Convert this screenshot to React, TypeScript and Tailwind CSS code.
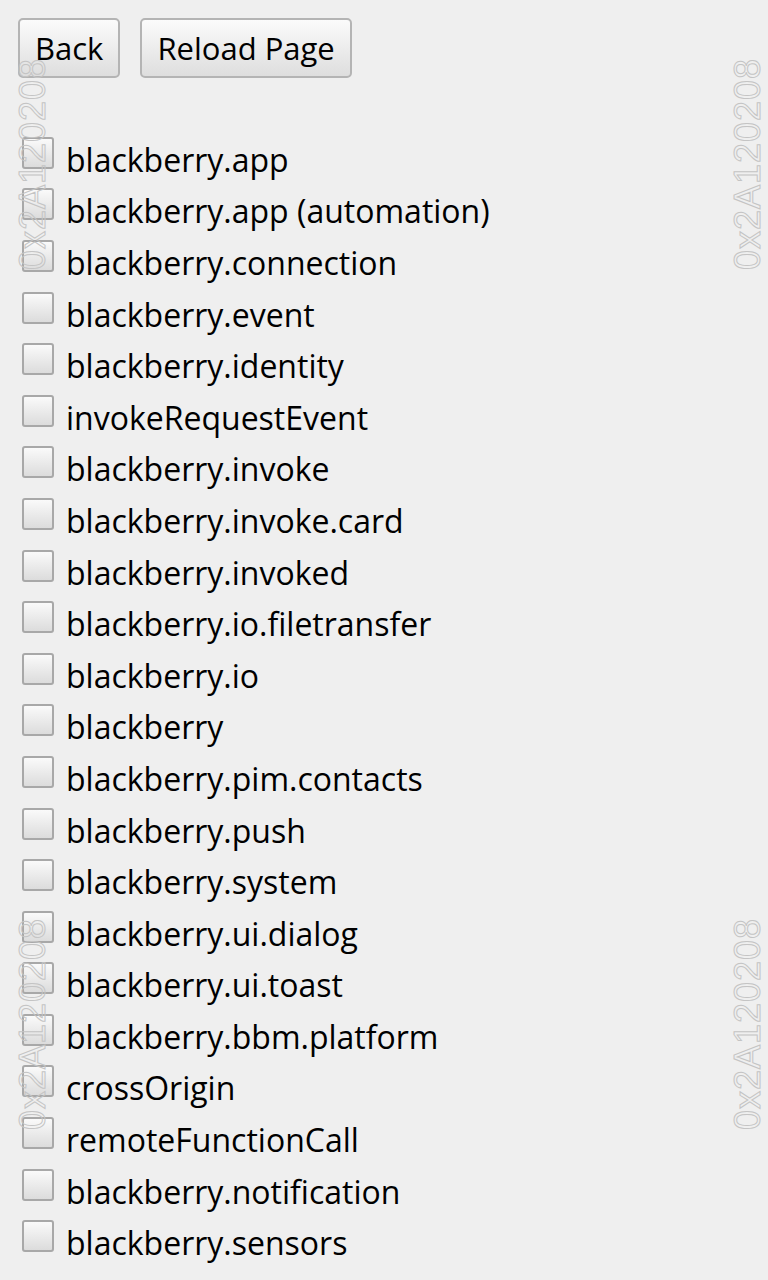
const items = [
  "blackberry.app",
  "blackberry.app (automation)",
  "blackberry.connection",
  "blackberry.event",
  "blackberry.identity",
  "invokeRequestEvent",
  "blackberry.invoke",
  "blackberry.invoke.card",
  "blackberry.invoked",
  "blackberry.io.filetransfer",
  "blackberry.io",
  "blackberry",
  "blackberry.pim.contacts",
  "blackberry.push",
  "blackberry.system",
  "blackberry.ui.dialog",
  "blackberry.ui.toast",
  "blackberry.bbm.platform",
  "crossOrigin",
  "remoteFunctionCall",
  "blackberry.notification",
  "blackberry.sensors",
];

// faint outlined serial stamped on both edges of the screen
function Watermark({ className }: { className: string }) {
  return (
    <div
      className={`absolute pointer-events-none -rotate-90 text-[36px] leading-none tracking-[1px] text-transparent font-['Liberation_Sans',sans-serif] [-webkit-text-stroke:1px_#c4c4c4] ${className}`}
    >
      0x2A120208
    </div>
  );
}

export default function App() {
  return (
    <div className="relative min-h-[1280px] w-[768px] bg-[#efefef] font-['Open_Sans',sans-serif] text-black overflow-hidden">
      <div className="flex gap-5 pl-[18px] pt-[18px]">
        <button className="h-[60px] px-[15px] rounded-[5px] border-2 border-[#b4b4b4] bg-gradient-to-b from-[#fbfbfb] to-[#dedede] text-[31px] leading-none">
          Back
        </button>
        <button className="h-[60px] px-[15px] rounded-[5px] border-2 border-[#b4b4b4] bg-gradient-to-b from-[#fbfbfb] to-[#dedede] text-[31px] leading-none">
          Reload Page
        </button>
      </div>

      <ul className="pt-[56px] pl-[22px]">
        {items.map((item) => (
          <li key={item} className="flex items-center h-[51.6px] gap-3">
            <span className="w-[32px] h-[32px] -mt-[14px] rounded-[3px] border-2 border-[#a8a8a8] bg-gradient-to-b from-[#fafafa] to-[#dcdcdc] shrink-0" />
            <span className="text-[32px] leading-none whitespace-nowrap">{item}</span>
          </li>
        ))}
      </ul>

      <Watermark className="left-[-73px] top-[146px]" />
      <Watermark className="left-[-73px] top-[1006px]" />
      <Watermark className="left-[642px] top-[146px]" />
      <Watermark className="left-[642px] top-[1006px]" />
    </div>
  );
}
